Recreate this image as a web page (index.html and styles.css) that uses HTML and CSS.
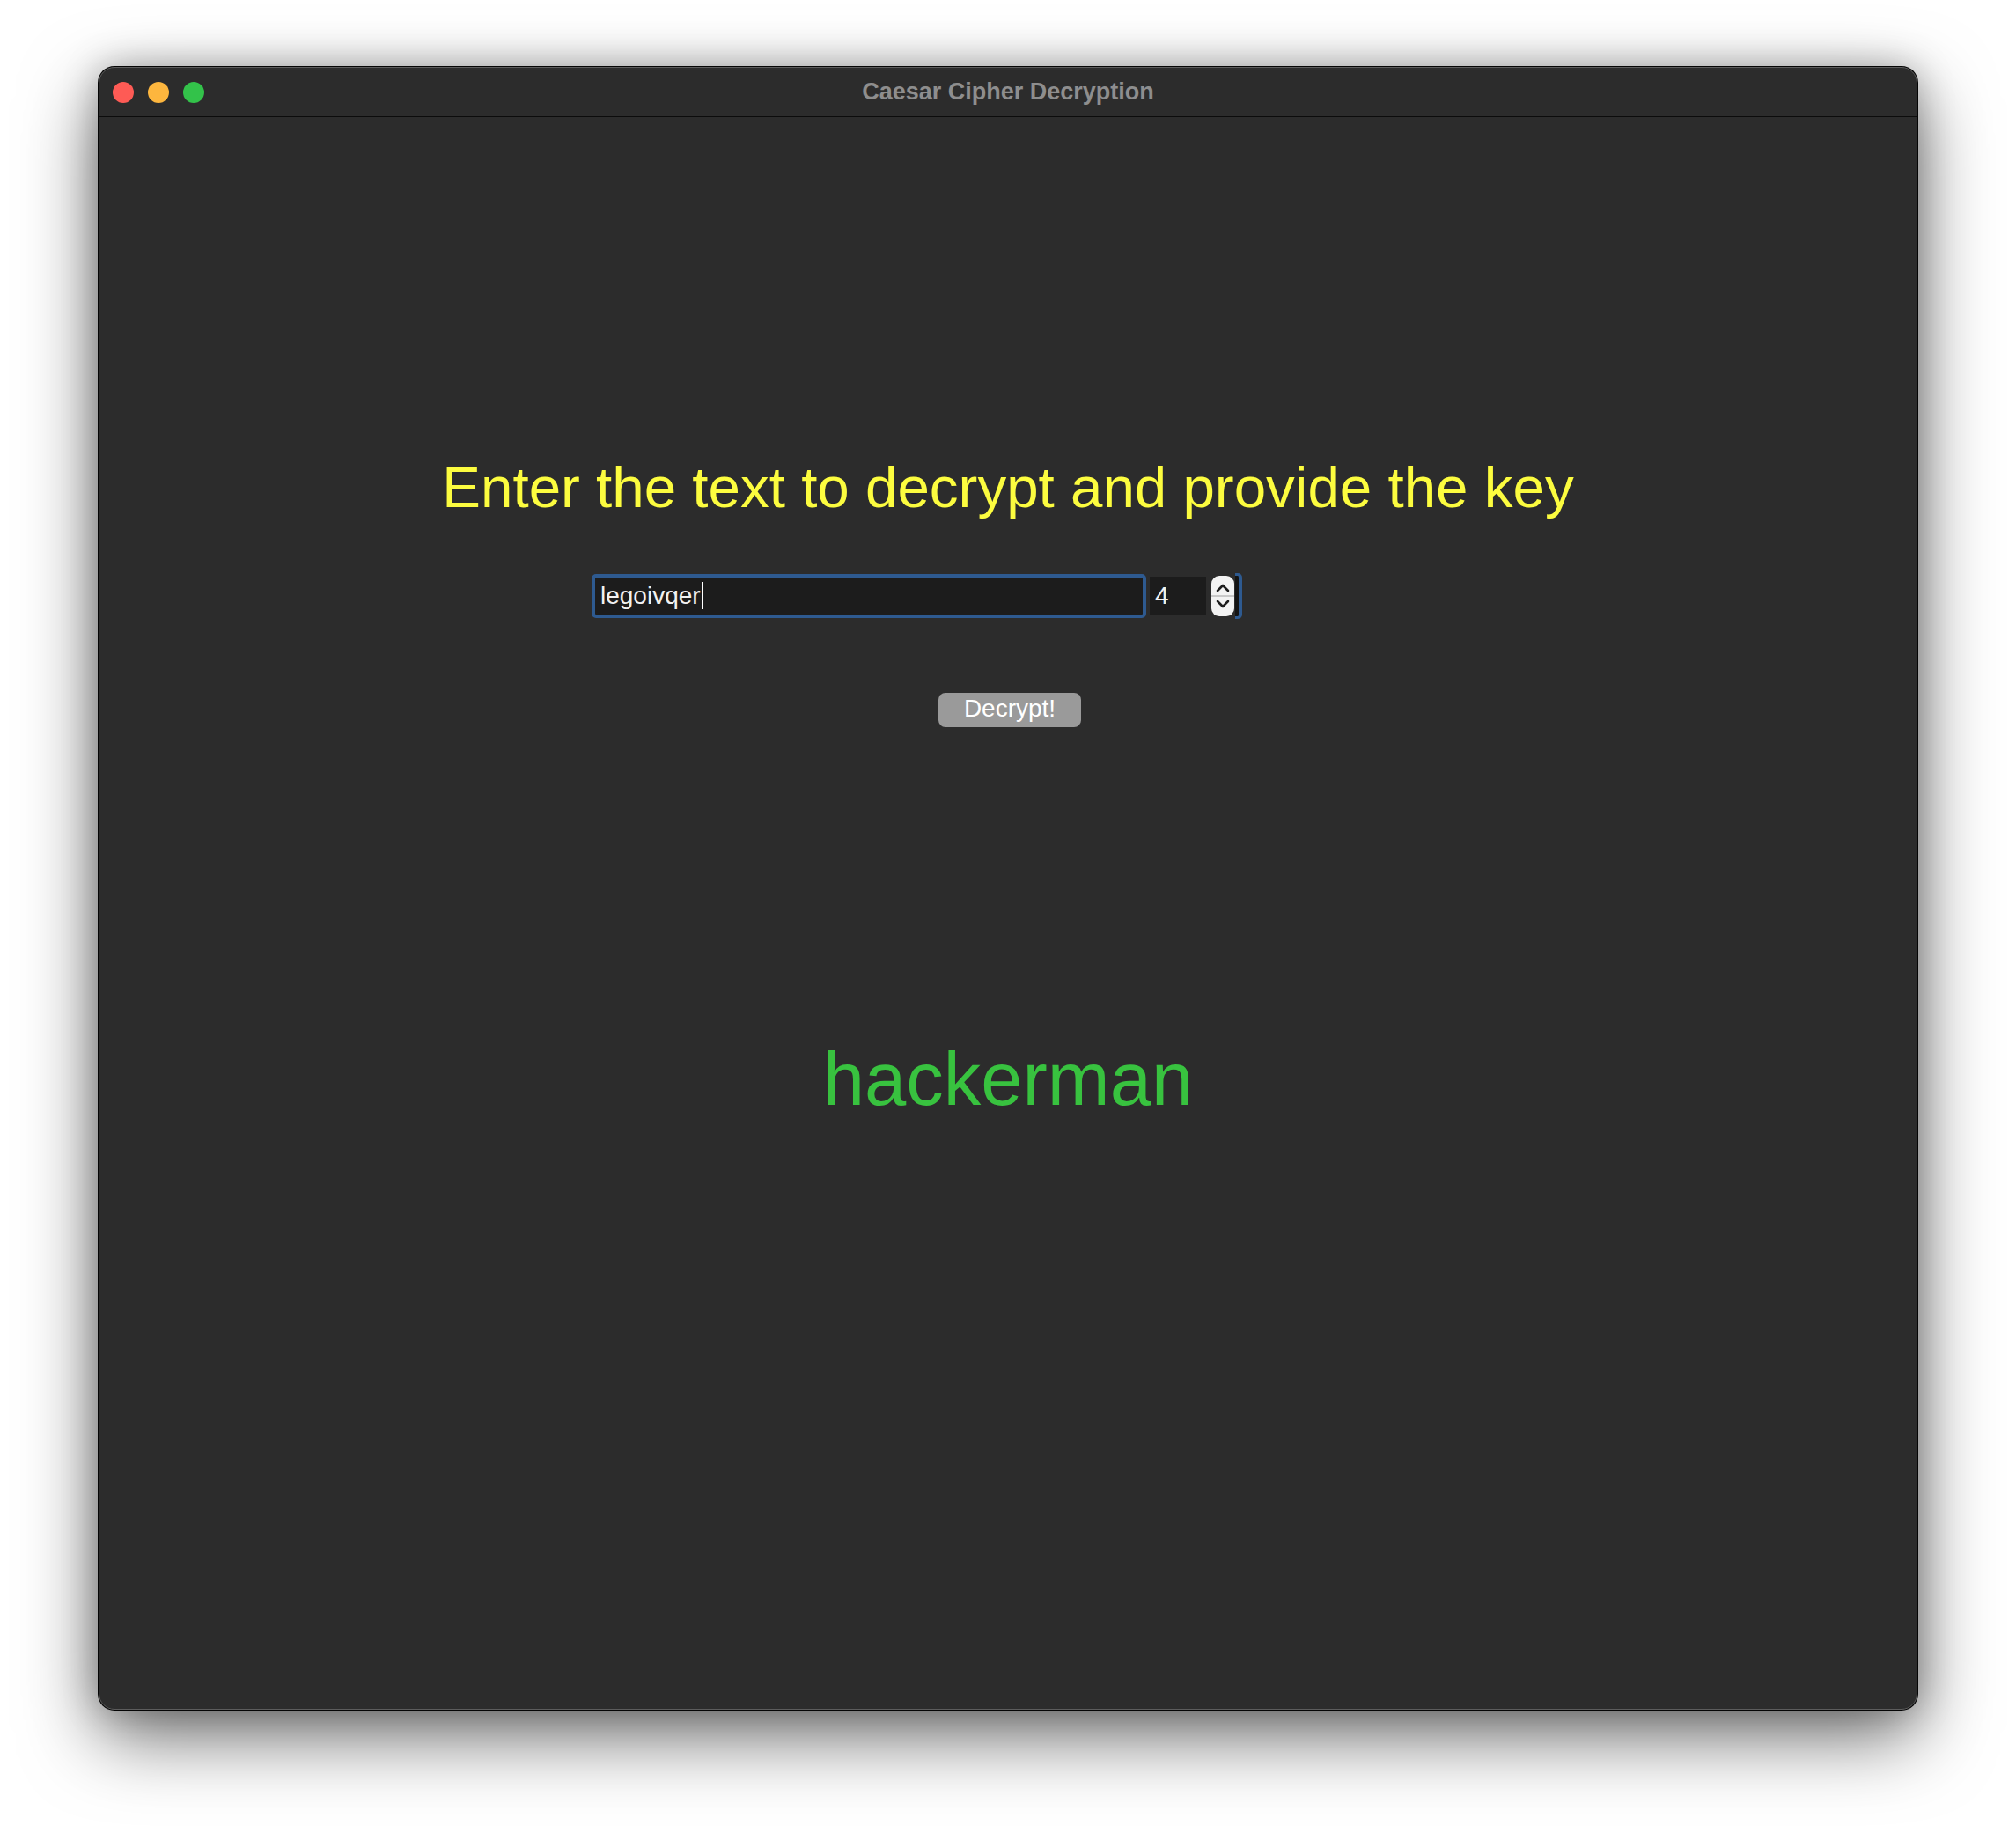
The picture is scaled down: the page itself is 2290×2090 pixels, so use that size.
FILE: index.html
```html
<!DOCTYPE html>
<html lang="en">
<head>
<meta charset="utf-8">
<title>Caesar Cipher Decryption</title>
<link rel="stylesheet" href="styles.css">
</head>
<body>
<div class="desktop">
  <div class="window">
    <div class="titlebar">
      <div class="lights">
        <span class="light red"></span>
        <span class="light yellow"></span>
        <span class="light green"></span>
      </div>
      <div class="title">Caesar Cipher Decryption</div>
      <div class="spacer"></div>
    </div>
    <div class="content">
      <h1 class="prompt">Enter the text to decrypt and provide the key</h1>
      <div class="input-row">
        <div class="text-field"><span class="value">legoivqer</span><span class="caret"></span></div>
        <div class="number-box">4</div>
        <div class="stepper">
          <svg width="26" height="46" viewBox="0 0 26 46">
            <rect x="0" y="0" width="26" height="46" rx="9" fill="#f3f3f3"/>
            <rect x="0" y="22" width="26" height="2" fill="#c9c9c9"/>
            <polyline points="7,17 13,11 19,17" fill="none" stroke="#1e1e1e" stroke-width="2.6" stroke-linecap="round" stroke-linejoin="round"/>
            <polyline points="7,29 13,35 19,29" fill="none" stroke="#1e1e1e" stroke-width="2.6" stroke-linecap="round" stroke-linejoin="round"/>
          </svg>
        </div>
        <div class="bracket"></div>
      </div>
      <button class="decrypt-btn">Decrypt!</button>
      <div class="result">hackerman</div>
    </div>
  </div>
</div>
</body>
</html>
```
FILE: styles.css
```css
html, body {
  margin: 0;
  padding: 0;
  background: #ffffff;
}

.desktop {
  width: 2290px;
  height: 2090px;
  padding: 76px 0 0 112px;
  box-sizing: border-box;
  overflow: hidden;
}

.window {
  width: 2066px;
  height: 1866px;
  box-sizing: border-box;
  background: #2c2c2c;
  border: 1px solid #5c5c5c;
  border-radius: 18px;
  box-shadow: 0 0 0 1px #050505, 0 30px 85px rgba(0, 0, 0, 0.58), 0 0 40px rgba(0, 0, 0, 0.25);
  display: flex;
  flex-direction: column;
  overflow: hidden;
  font-family: "Liberation Sans", Arial, sans-serif;
}

.titlebar {
  height: 55px;
  border-bottom: 1px solid #0c0c0c;
  display: grid;
  grid-template-columns: 1fr auto 1fr;
  align-items: center;
  flex: none;
}

.lights {
  display: flex;
  gap: 16px;
  padding-left: 15px;
}

.light {
  width: 24px;
  height: 24px;
  border-radius: 50%;
  display: block;
}

.light.red { background: #fe5b55; }
.light.yellow { background: #fdb63e; }
.light.green { background: #33c24a; }

.title {
  font-weight: bold;
  font-size: 27px;
  color: #8e8e8e;
  margin-top: -1px;
}

.content {
  flex: 1;
  display: flex;
  flex-direction: column;
  align-items: center;
}

.prompt {
  margin: 388px 0 0 0;
  font-weight: normal;
  font-size: 65.5px;
  line-height: 1;
  color: #fcfc3f;
  white-space: nowrap;
}

.input-row {
  align-self: flex-start;
  margin: 64px 0 0 559px;
  height: 52px;
  display: flex;
  align-items: center;
}

.text-field {
  width: 630px;
  height: 50px;
  box-sizing: border-box;
  border: 4px solid #2e5a90;
  border-radius: 5px;
  background: #1c1c1c;
  padding-left: 6px;
  font-size: 28px;
  line-height: 42px;
  color: #f2f2f2;
  white-space: nowrap;
}

.caret {
  display: inline-block;
  width: 0;
  height: 31px;
  border-left: 2px solid #ffffff;
  margin-left: 1px;
  vertical-align: -6px;
}

.number-box {
  margin-left: 4px;
  width: 64px;
  height: 44px;
  box-sizing: border-box;
  background: #1c1c1c;
  padding-left: 6px;
  font-size: 28px;
  line-height: 44px;
  color: #f2f2f2;
}

.stepper {
  margin-left: 6px;
  width: 26px;
  height: 46px;
}

.stepper svg {
  display: block;
}

.bracket {
  margin-left: 1px;
  width: 8px;
  height: 52px;
  box-sizing: border-box;
  border-top: 3px solid #2e5a90;
  border-right: 4px solid #2e5a90;
  border-bottom: 3px solid #2e5a90;
  border-radius: 0 5px 5px 0;
  background: #141414;
}

.decrypt-btn {
  margin: 84px 0 0 4px;
  width: 162px;
  height: 39px;
  border: none;
  border-radius: 8px;
  background: #9a9a9a;
  color: #ffffff;
  font-family: "Liberation Sans", Arial, sans-serif;
  font-size: 28px;
  line-height: 36px;
  padding: 0 0 3px 0;
}

.result {
  margin-top: 357px;
  font-size: 85px;
  line-height: 1;
  color: #38c23f;
}
```
